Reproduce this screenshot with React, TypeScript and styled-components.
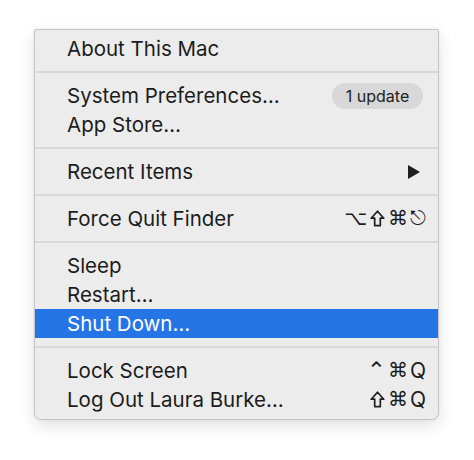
import React from 'react';
import styled, { createGlobalStyle } from 'styled-components';

const GlobalStyle = createGlobalStyle`
  html, body {
    margin: 0;
    padding: 0;
    background: #ffffff;
  }
`;

type Item = {
  label: string;
  keys?: string[];
  badge?: string;
  submenu?: boolean;
  active?: boolean;
};

const sections: Item[][] = [
  [{ label: 'About This Mac' }],
  [
    { label: 'System Preferences…', badge: '1 update' },
    { label: 'App Store…' },
  ],
  [{ label: 'Recent Items', submenu: true }],
  [{ label: 'Force Quit Finder', keys: ['⌥', 'shift', '⌘', '⎋'] }],
  [
    { label: 'Sleep' },
    { label: 'Restart…' },
    { label: 'Shut Down…', active: true },
  ],
  [
    { label: 'Lock Screen', keys: ['⌃', '⌘', 'Q'] },
    { label: 'Log Out Laura Burke…', keys: ['shift', '⌘', 'Q'] },
  ],
];

const SubmenuArrow = () => (
  <svg width="14" height="14" viewBox="0 0 14 14">
    <path d="M1 0 L13 7 L1 14 Z" fill="#1f1f1f" />
  </svg>
);

const ShiftIcon = () => (
  <svg width="15" height="17" viewBox="0 0 15 17">
    <path
      d="M7.5 1.2 L13.8 8.2 H10.3 V15.6 H4.7 V8.2 H1.2 Z"
      fill="none"
      stroke="#1f1f1f"
      strokeWidth="1.7"
      strokeLinejoin="round"
    />
  </svg>
);

export default function App() {
  return (
    <Page>
      <GlobalStyle />
      <Menu>
        {sections.map((section, i) => (
          <React.Fragment key={i}>
            {i > 0 && <Separator />}
            {section.map((item) => (
              <Row key={item.label} $active={!!item.active}>
                <Label>{item.label}</Label>
                {item.badge && <Badge>{item.badge}</Badge>}
                {item.keys && (
                  <Shortcut>
                    {item.keys.map((k, j) =>
                      k === 'shift' ? (
                        <ShiftKey key={j}>
                          <ShiftIcon />
                        </ShiftKey>
                      ) : (
                        <Key key={j} $latin={k === 'Q'} $caret={k === '⌃'}>
                          {k}
                        </Key>
                      )
                    )}
                  </Shortcut>
                )}
                {item.submenu && (
                  <Arrow>
                    <SubmenuArrow />
                  </Arrow>
                )}
              </Row>
            ))}
          </React.Fragment>
        ))}
      </Menu>
    </Page>
  );
}

const Page = styled.div`
  padding: 29px 0 0 34px;
  height: 460px;
  box-sizing: border-box;
`;

const Menu = styled.div`
  box-sizing: border-box;
  width: 405px;
  padding: 4px 0 5px;
  display: flex;
  flex-direction: column;
  background: #ececec;
  border: 1px solid #c6c6c6;
  border-radius: 2px 2px 7px 7px;
  box-shadow: 0 6px 16px rgba(0, 0, 0, 0.12), 0 0 3px rgba(0, 0, 0, 0.06);
  font-family: Inter, 'Liberation Sans', sans-serif;
  color: #1c1c1c;
`;

const Row = styled.div<{ $active: boolean }>`
  height: 29px;
  padding: 0 12px 0 32px;
  display: flex;
  align-items: center;
  justify-content: space-between;
  background: ${({ $active }) => ($active ? '#2675e6' : 'transparent')};
  color: ${({ $active }) => ($active ? '#ffffff' : '#1c1c1c')};
`;

const Label = styled.span`
  font-size: 20.5px;
  line-height: 29px;
  white-space: nowrap;
`;

const Shortcut = styled.span`
  display: flex;
  align-items: center;
  gap: 2px;
`;

const Key = styled.span<{ $latin: boolean; $caret: boolean }>`
  font-family: ${({ $latin }) =>
    $latin ? "Inter, 'Liberation Sans', sans-serif" : "'DejaVu Sans', sans-serif"};
  font-size: ${({ $latin, $caret }) => ($latin ? '21px' : $caret ? '23px' : '20px')};
  line-height: 29px;
`;

const ShiftKey = styled.span`
  display: flex;
  margin: 0 1px;
`;

const Badge = styled.span`
  width: 91px;
  height: 26px;
  margin-right: 3px;
  border-radius: 13px;
  background: #d8d8d8;
  display: flex;
  align-items: center;
  justify-content: center;
  font-size: 16px;
  color: #222222;
`;

const Arrow = styled.span`
  display: flex;
  margin-right: 5px;
`;

const Separator = styled.div`
  height: 18px;
  display: flex;
  align-items: center;

  &::after {
    content: '';
    flex: 1;
    height: 2px;
    background: #d9d9d9;
  }
`;
